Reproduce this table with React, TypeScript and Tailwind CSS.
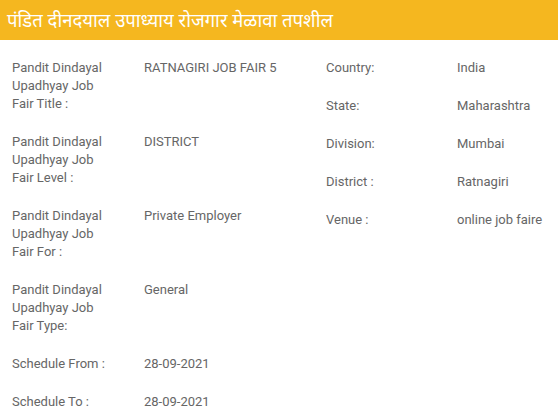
import React from "react";

const left: [string, string][] = [
  ["Pandit Dindayal Upadhyay Job Fair Title :", "RATNAGIRI JOB FAIR 5"],
  ["Pandit Dindayal Upadhyay Job Fair Level :", "DISTRICT"],
  ["Pandit Dindayal Upadhyay Job Fair For :", "Private Employer"],
  ["Pandit Dindayal Upadhyay Job Fair Type:", "General"],
  ["Schedule From :", "28-09-2021"],
  ["Schedule To :", "28-09-2021"],
];

const right: [string, string][] = [
  ["Country:", "India"],
  ["State:", "Maharashtra"],
  ["Division:", "Mumbai"],
  ["District :", "Ratnagiri"],
  ["Venue :", "online job faire"],
];

function Row({ label, value, labelWidth }: { label: string; value: string; labelWidth: string }) {
  return (
    <div className="flex py-[10px]">
      <div className={`${labelWidth} shrink-0 pr-8`}>{label}</div>
      <div className="flex-1">{value}</div>
    </div>
  );
}

export default function App() {
  return (
    <div className="w-[558px] h-[416px] overflow-hidden bg-white font-['Roboto',sans-serif]">
      <div className="h-10 bg-[#f5b71f] px-[7px] flex items-center">
        <h2 className="text-white text-[18.5px] leading-none font-['Noto_Sans','Noto_Sans_Devanagari',sans-serif]">
          पंडित दीनदयाल उपाध्याय रोजगार मेळावा तपशील
        </h2>
      </div>
      <div className="flex pt-[9px] text-[13px] leading-[18px] text-[#666]">
        <div className="w-[314px] pl-3">
          {left.map(([l, v]) => (
            <Row key={l} label={l} value={v} labelWidth="w-[132px]" />
          ))}
        </div>
        <div className="flex-1 pl-3">
          {right.map(([l, v]) => (
            <Row key={l} label={l} value={v} labelWidth="w-[131px]" />
          ))}
        </div>
      </div>
    </div>
  );
}
